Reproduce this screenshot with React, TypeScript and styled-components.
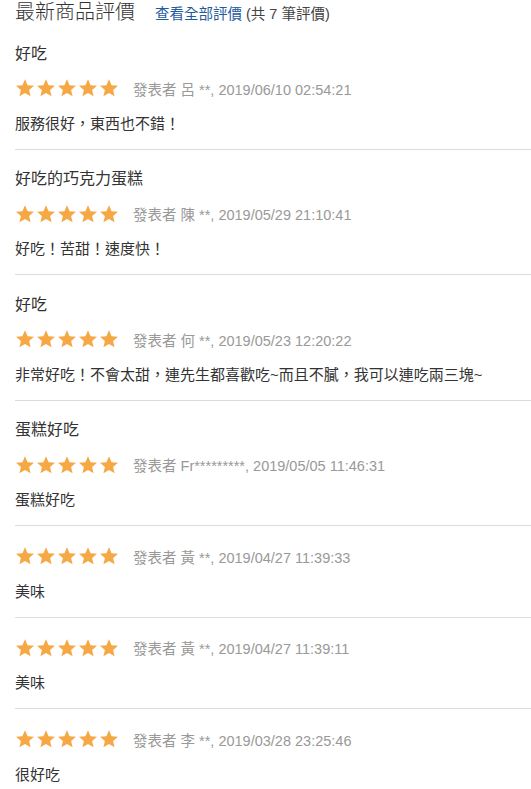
import styled, { createGlobalStyle } from 'styled-components';

const GlobalStyle = createGlobalStyle`
  body {
    margin: 0;
    background: #fff;
    font-family: "Liberation Sans", Arial, "Noto Sans CJK TC", sans-serif;
    color: #333;
  }
`;

type Review = {
  title?: string;
  author: string;
  date: string;
  content: string;
};

const reviews: Review[] = [
  { title: '好吃', author: '呂 **', date: '2019/06/10 02:54:21', content: '服務很好，東西也不錯！' },
  { title: '好吃的巧克力蛋糕', author: '陳 **', date: '2019/05/29 21:10:41', content: '好吃！苦甜！速度快！' },
  {
    title: '好吃',
    author: '何 **',
    date: '2019/05/23 12:20:22',
    content: '非常好吃！不會太甜，連先生都喜歡吃~而且不膩，我可以連吃兩三塊~',
  },
  { title: '蛋糕好吃', author: 'Fr*********', date: '2019/05/05 11:46:31', content: '蛋糕好吃' },
  { author: '黃 **', date: '2019/04/27 11:39:33', content: '美味' },
  { author: '黃 **', date: '2019/04/27 11:39:11', content: '美味' },
  { author: '李 **', date: '2019/03/28 23:25:46', content: '很好吃' },
];

function Star() {
  return (
    <StarIcon viewBox="0 0 24 24">
      <path d="M12 1.5l3.1 7.2 7.7.6-5.9 5.1 1.8 7.6L12 17.9 5.3 22l1.8-7.6L1.2 9.3l7.7-.6z" />
    </StarIcon>
  );
}

export default function App() {
  return (
    <>
      <GlobalStyle />
      <ReviewSection>
        <Header>
          <Heading>最新商品評價</Heading>
          <AllLink href="#">查看全部評價</AllLink>
          <Count>(共 7 筆評價)</Count>
        </Header>

        <ReviewList>
          {reviews.map((r, i) => (
            <ReviewItem key={i}>
              {r.title && <ReviewTitle>{r.title}</ReviewTitle>}
              <MetaRow>
                <Stars>
                  {[0, 1, 2, 3, 4].map((s) => (
                    <Star key={s} />
                  ))}
                </Stars>
                <Meta>
                  發表者 {r.author}, {r.date}
                </Meta>
              </MetaRow>
              <Content>{r.content}</Content>
            </ReviewItem>
          ))}
        </ReviewList>
      </ReviewSection>
    </>
  );
}

const ReviewSection = styled.section`
  padding-left: 15px;
  overflow: hidden;
`;

const Header = styled.div`
  display: flex;
  align-items: baseline;
  height: 24px;
  white-space: nowrap;
`;

const Heading = styled.h2`
  margin: 0 20px 0 0;
  font-size: 20px;
  font-weight: 300;
  line-height: 24px;
  color: #333;
`;

const AllLink = styled.a`
  font-size: 14.5px;
  color: #1f5c9e;
  text-decoration: none;
  margin-right: 4px;
`;

const Count = styled.span`
  font-size: 14.5px;
  color: #444;
`;

const ReviewList = styled.ul`
  list-style: none;
  margin: 0;
  padding: 0;
`;

const ReviewItem = styled.li`
  padding: 12.5px 0 8px;
  border-top: 1px solid #dcdcdc;
  margin-right: -20px;

  &:first-child {
    border-top: none;
  }
`;

const ReviewTitle = styled.div`
  height: 34px;
  line-height: 34px;
  font-size: 16px;
  color: #333;
`;

const MetaRow = styled.div`
  display: flex;
  align-items: center;
  height: 35px;
  white-space: nowrap;
`;

const Stars = styled.div`
  display: flex;
  gap: 1px;
  margin-right: 14px;
`;

const StarIcon = styled.svg`
  width: 20px;
  height: 20px;
  fill: #f5a844;
`;

const Meta = styled.span`
  font-size: 14.5px;
  color: #999;
`;

const Content = styled.div`
  height: 35px;
  line-height: 35px;
  font-size: 15px;
  color: #333;
  white-space: nowrap;
`;
